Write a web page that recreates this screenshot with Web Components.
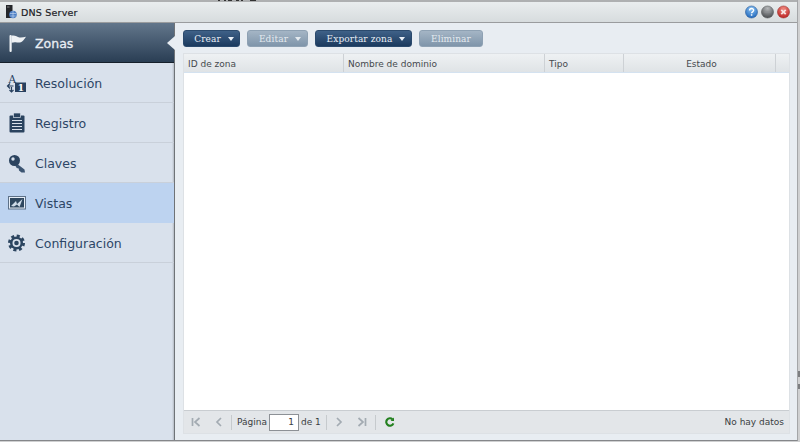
<!DOCTYPE html>
<html lang="en">
<head>
<meta charset="UTF-8">
<title>DNS Server</title>
<style>
    html, body { margin: 0; height: 100%; }
    body {
        overflow: hidden;
        font-family: "DejaVu Sans", sans-serif;
        /* bits of the desktop text behind the window */
        background:
            linear-gradient(#7c7e80, #7c7e80) 798px 371px / 2px 6px no-repeat,
            linear-gradient(#7c7e80, #7c7e80) 798px 384px / 2px 5px no-repeat,
            #cfd0d1;
    }
</style>
</head>
<body>

<template id="dns-window-template">
    <style>
        :host {
            display: flex;
            flex-direction: column;
            width: 797px;
            height: 438px;
            /* cropped text of the window behind */
            padding-top: 2px;
            background:
                linear-gradient(90deg, transparent 218px, #333 218px, #333 220px, transparent 220px, transparent 224px, #333 224px, #333 226px, transparent 226px, transparent 228px, #333 228px, #333 232px, transparent 232px, transparent 236px, #333 236px, #333 239px, transparent 239px, transparent 241px, #333 241px, #333 243px, transparent 243px, transparent 250px, #333 250px, #333 256px, transparent 256px) 0 0 / 100% 1px no-repeat,
                #aeb0b1;
            border-bottom: 1px solid #85878a;
            border-right: 1px solid #a4a6a8;
        }
        .body { flex: 1; display: flex; min-height: 0; }
    </style>
    <slot name="title"></slot>
    <div class="body">
        <slot name="nav"></slot>
        <slot name="main"></slot>
    </div>
</template>

<template id="title-bar-template">
    <style>
        :host {
            display: flex;
            align-items: center;
            height: 20px;
            padding: 0 7px 0 5px;
            background: linear-gradient(#e9edee, #d7dcde);
            border-bottom: 1px solid #9a9c9e;
            color: #1c2026;
            font: 9.5px "DejaVu Sans", sans-serif;
            -webkit-text-stroke: 0.2px #1c2026;
        }
        .logo { width: 12px; height: 14px; margin-right: 4px; }
        .name { flex: 1; letter-spacing: 0.2px; }
        .btns { display: flex; gap: 3px; }
        .btns svg { width: 13px; height: 14px; display: block; }
    </style>
    <svg class="logo" viewBox="0 0 12 14">
        <rect x="1" y="0" width="6.500" height="13" fill="#24262a"/>
        <rect x="2" y="1.500" width="2.500" height="1" fill="#888"/>
        <circle cx="8" cy="9.500" r="3.800" fill="#4d7fc4"/>
        <path d="M5 8.500h6M5.500 11h5M8 6v7" stroke="#b9d0ee" stroke-width=".7"/>
    </svg>
    <span class="name"><slot></slot></span>
    <div class="btns">
        <svg viewBox="0 0 14 14">
            <defs><radialGradient id="b" cx=".5" cy=".25" r=".8"><stop offset="0" stop-color="#8cc4f4"/><stop offset="1" stop-color="#1a62b8"/></radialGradient></defs>
            <circle cx="7" cy="7" r="6.500" fill="url(#b)" stroke="#2a5a96" stroke-width=".6"/>
            <path d="M4.900 5.400c0-2.800 4.400-2.800 4.400-.2 0 1.700-2.200 1.600-2.200 3.200" fill="none" stroke="#fff" stroke-width="1.500"/>
            <rect x="6.300" y="9.400" width="1.600" height="1.600" fill="#fff"/>
        </svg>
        <svg viewBox="0 0 14 14">
            <defs><radialGradient id="g" cx=".5" cy=".2" r=".8"><stop offset="0" stop-color="#b5b8ba"/><stop offset="1" stop-color="#4a4d50"/></radialGradient></defs>
            <circle cx="7" cy="7" r="6.500" fill="url(#g)" stroke="#55585a" stroke-width=".6"/>
            <rect x="3.500" y="6.500" width="7" height="1" fill="#8e9194"/>
        </svg>
        <svg viewBox="0 0 14 14">
            <defs><radialGradient id="r" cx=".5" cy=".25" r=".8"><stop offset="0" stop-color="#f08a80"/><stop offset="1" stop-color="#b81c1c"/></radialGradient></defs>
            <circle cx="7" cy="7" r="6.500" fill="url(#r)" stroke="#98302c" stroke-width=".6"/>
            <path d="M4.600 4.600l4.800 4.800M9.400 4.600l-4.800 4.800" stroke="#f6e4e2" stroke-width="1.900"/>
        </svg>
    </div>
</template>

<template id="side-nav-template">
    <style>
        :host {
            display: block;
            width: 174px;
            background: linear-gradient(90deg, #d9e1ec 172px, #b5bbc3);
            border-right: 1px solid #6f7377;
            flex: none;
        }
    </style>
    <slot></slot>
</template>

<template id="nav-item-template">
    <style>
        :host {
            display: flex;
            align-items: center;
            box-sizing: border-box;
            height: 40px;
            padding-left: 6px;
            gap: 7px;
            position: relative;
            color: #2d4666;
            font: 12.5px "DejaVu Sans", sans-serif;
            border-bottom: 1px solid #c9d0da;
        }
        :host([active]) {
            background: linear-gradient(#62768b, #2a3e54);
            border-bottom: 1px solid #16202b;
            color: #e9eef4;
            -webkit-text-stroke: 0.3px #e9eef4;
        }
        :host([active])::after {
            content: "";
            position: absolute;
            right: -1px;
            top: 13px;
            border: 7px solid transparent;
            border-left-width: 0;
            border-right: 8px solid #e8edf2;
        }
        :host([hover]) { background: #bdd3f0; border-bottom-color: #bdd3f0; }
        span { padding-top: 2px; }
        ::slotted(svg) { width: 22px; height: 22px; flex: none; display: block; }
    </style>
    <slot name="icon"></slot>
    <span><slot></slot></span>
</template>

<template id="main-panel-template">
    <style>
        :host {
            flex: 1;
            min-width: 0;
            display: flex;
            flex-direction: column;
            box-sizing: border-box;
            padding: 7px 7px 6px 8px;
            background: #e8edf2;
        }
    </style>
    <slot></slot>
</template>

<template id="tool-bar-template">
    <style>
        :host { display: flex; gap: 7px; height: 17px; margin-bottom: 6px; }
    </style>
    <slot></slot>
</template>

<template id="tool-button-template">
    <style>
        :host {
            display: flex;
            align-items: center;
            justify-content: center;
            gap: 7px;
            box-sizing: border-box;
            height: 17px;
            border-radius: 3px;
            background: linear-gradient(#3f6188, #1b3a5e);
            border: 1px solid #2b4a6d;
            color: #e8eef5;
            font: 9px "DejaVu Serif", serif;
            letter-spacing: 0.1px;
        }
        :host([disabled]) {
            background: linear-gradient(#a4b5c5, #7f95aa);
            border-color: #8ea1b3;
            color: #e4eaef;
        }
        :host([menu]) { padding-left: 5px; }
        .caret { display: none; border: 3.500px solid transparent; border-top: 4px solid currentColor; border-bottom: 0; }
        :host([menu]) .caret { display: block; }
    </style>
    <slot></slot>
    <span class="caret"></span>
</template>

<template id="data-grid-template">
    <style>
        :host {
            flex: 1;
            min-height: 0;
            display: flex;
            flex-direction: column;
            border: 1px solid #dde1e5;
            background: #fff;
        }
        .head {
            display: grid;
            grid-template-columns: 160px 201px 79px 152px 1fr;
            height: 18px;
            background: linear-gradient(#eef1f3, #dfe3e6);
            border-bottom: 1px solid #d4e2f0;
            flex: none;
        }
        .rows { flex: 1; background: #fff; }
    </style>
    <div class="head"><slot name="column"></slot></div>
    <div class="rows"></div>
    <slot name="pager"></slot>
</template>

<template id="grid-column-template">
    <style>
        :host {
            display: flex;
            align-items: center;
            padding: 1px 0 0 4px;
            border-right: 1px solid #cdd1d5;
            color: #45494d;
            font: 9px "DejaVu Sans", sans-serif;
            min-width: 0;
        }
        :host([center]) { justify-content: center; padding-left: 4px; }
        :host([last]) { border-right: 0; }
    </style>
    <slot></slot>
</template>

<template id="grid-pager-template">
    <style>
        :host {
            display: flex;
            align-items: center;
            flex: none;
            height: 22px;
            padding: 0 5px 0 7px;
            background: #e3e6e9;
            border-top: 1px solid #c9cdd1;
            color: #3a3e42;
            font: 9px "DejaVu Sans", sans-serif;
        }
        svg { display: block; flex: none; width: 10px; height: 10px; fill: none; stroke: #a3abb2; stroke-width: 1.700; }
        .sep { width: 1px; height: 15px; background: #c6cacd; flex: none; }
        input {
            box-sizing: border-box;
            width: 30px;
            height: 17px;
            margin: 0 2px;
            padding: 0 4px 0 0;
            border: 1px solid #8d9196;
            background: #fff;
            text-align: right;
            color: #3a3e42;
            font: 9px "DejaVu Sans", sans-serif;
            outline: 0;
        }
        .info { margin-left: auto; }
    </style>
    <svg viewBox="0 0 10 10"><path d="M1.500 1v8M8.500 1L4 5l4.500 4"/></svg>
    <svg style="margin-left:13px" viewBox="0 0 10 10"><path d="M7 1L3 5l4 4"/></svg>
    <span class="sep" style="margin-left:7px"></span>
    <span style="margin-left:5px">Página</span>
    <input value="1" aria-label="Página">
    <span>de 1</span>
    <span class="sep" style="margin-left:5px"></span>
    <svg style="margin-left:7px" viewBox="0 0 10 10"><path d="M3 1l4 4-4 4"/></svg>
    <svg style="margin-left:13px" viewBox="0 0 10 10"><path d="M1.500 1L6 5 1.500 9M8.500 1v8"/></svg>
    <span class="sep" style="margin-left:8px"></span>
    <svg style="margin-left:9px;stroke:#23801f;stroke-width:2.100" viewBox="0 0 10 10"><path d="M8.400 6.400A3.700 3.700 0 1 1 7.600 2.400"/><path d="M9 .4v3.600H5.600z" fill="#23801f" stroke="none"/></svg>
    <span class="info"><slot></slot></span>
</template>

<script>
    // every element just stamps its own template into an open shadow root
    function define(tag) {
        customElements.define(tag, class extends HTMLElement {
            constructor() {
                super();
                const template = document.getElementById(tag + '-template');
                this.attachShadow({mode: 'open'}).appendChild(template.content.cloneNode(true));
            }
        });
    }
    ['dns-window', 'title-bar', 'side-nav', 'nav-item', 'main-panel', 'tool-bar',
     'tool-button', 'data-grid', 'grid-column', 'grid-pager'].forEach(define);
</script>

<dns-window>
    <title-bar slot="title">DNS Server</title-bar>

    <side-nav slot="nav">
        <nav-item active>
            <svg slot="icon" viewBox="0 0 22 22">
                <rect x="3.500" y="3" width="2.200" height="17" rx="1" fill="#eef1f4"/>
                <path d="M5.500 3.800c3.500-.8 5.500 1.200 8 1.700 2 .4 4.200-.3 6.500-.7-.8 1.500-2 2.700-2.800 3.600-1.800 2-4.200 2.400-6.200 2-1.800-.4-3.500-.3-5.500.3z" fill="#eef1f4"/>
            </svg>
            Zonas
        </nav-item>
        <nav-item>
            <svg slot="icon" viewBox="0 0 22 22">
                <text x="2.500" y="10.500" font-family="DejaVu Serif" font-size="10.500" fill="#27405f">A</text>
                <rect x="9" y="10.500" width="11" height="9.500" fill="#27405f"/>
                <text x="11.800" y="19" font-family="DejaVu Serif" font-weight="bold" font-size="9" fill="#fff">1</text>
                <path d="M1.500 14h6M4 11.500L1.500 14 4 16.500M5.500 15v5M3.500 18l2 2 2-2" fill="none" stroke="#27405f" stroke-width="1.200"/>
            </svg>
            Resolución
        </nav-item>
        <nav-item>
            <svg slot="icon" viewBox="0 0 22 22">
                <rect x="3.500" y="3.500" width="15" height="17" rx="1" fill="#2a435f"/>
                <rect x="7.500" y="1" width="7" height="4.500" fill="#2a435f" stroke="#d9e1ec" stroke-width=".7"/>
                <path d="M6 8.500h10M6 11.500h10M6 14.500h10M6 17.500h10" stroke="#d9e1ec" stroke-width="1.100"/>
            </svg>
            Registro
        </nav-item>
        <nav-item>
            <svg slot="icon" viewBox="0 0 22 22">
                <path d="M10 11l8.500 6.500.5 3h-3.500L13 18.500l-.3-2-2-.5-1.500-2.500z" fill="#3c5572"/>
                <circle cx="8.500" cy="8.500" r="5.500" fill="#2b435f"/>
                <circle cx="7" cy="7" r="1.700" fill="#d9e1ec"/>
            </svg>
            Claves
        </nav-item>
        <nav-item hover>
            <svg slot="icon" viewBox="0 0 22 22">
                <rect x="2.500" y="4.500" width="17" height="12.500" fill="#e6edf6" stroke="#5d7188"/>
                <rect x="4" y="6" width="14" height="9.500" fill="#2f475f"/>
                <path d="M5 14l5-5 1 3 5.500-5-3 8-2.500-2.500-3 2z" fill="#cfdbe8"/>
            </svg>
            Vistas
        </nav-item>
        <nav-item>
            <svg slot="icon" viewBox="0 0 22 22">
                <circle cx="10.500" cy="11" r="6.500" fill="#2c4560"/>
                <circle cx="10.500" cy="11" r="7" fill="none" stroke="#2c4560" stroke-width="3" stroke-dasharray="3 2.500"/>
                <circle cx="10.500" cy="11" r="4" fill="#d9e1ec"/>
                <circle cx="10.500" cy="11" r="2.300" fill="#2c4560"/>
            </svg>
            Configuración
        </nav-item>
    </side-nav>

    <main-panel slot="main">
        <tool-bar>
            <tool-button menu style="width:57px">Crear</tool-button>
            <tool-button menu disabled style="width:61px">Editar</tool-button>
            <tool-button menu style="width:97px">Exportar zona</tool-button>
            <tool-button disabled style="width:64px">Eliminar</tool-button>
        </tool-bar>
        <data-grid>
            <grid-column slot="column">ID de zona</grid-column>
            <grid-column slot="column">Nombre de dominio</grid-column>
            <grid-column slot="column">Tipo</grid-column>
            <grid-column slot="column" center>Estado</grid-column>
            <grid-column slot="column" last></grid-column>
            <grid-pager slot="pager">No hay datos</grid-pager>
        </data-grid>
    </main-panel>
</dns-window>

</body>
</html>
